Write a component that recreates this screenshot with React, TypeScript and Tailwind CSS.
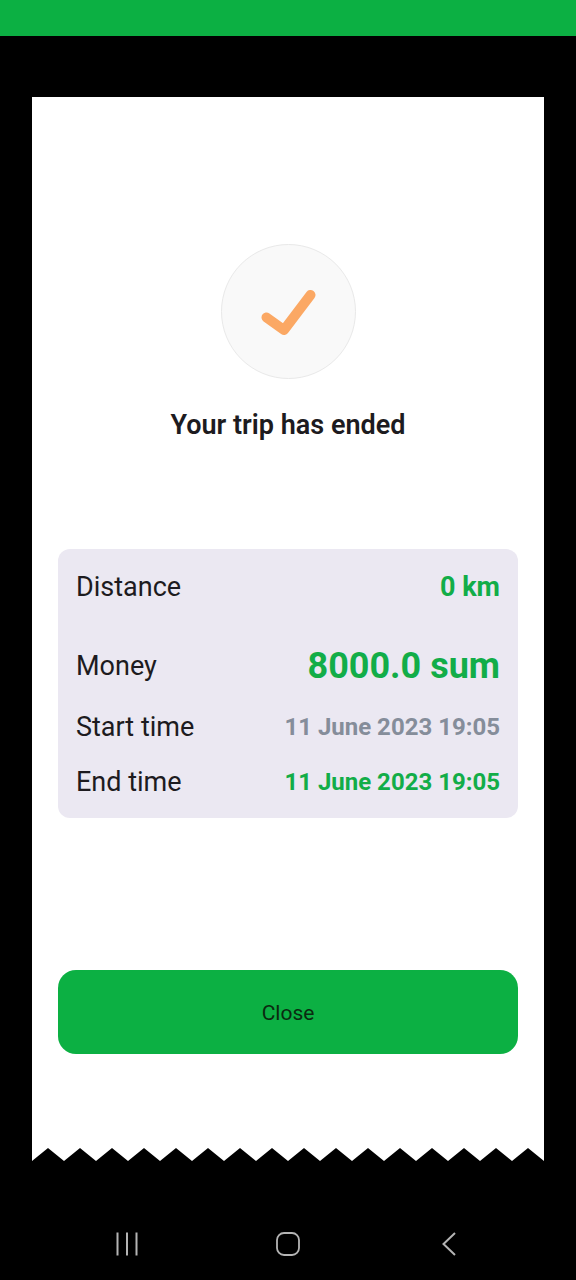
const details = [
  {
    label: "Distance",
    value: "0 km",
    row: "mb-[38px]",
    style: "text-[27px] text-[#12ad48]",
  },
  {
    label: "Money",
    value: "8000.0 sum",
    row: "mb-[21px]",
    style: "text-4xl text-[#12ad48]",
  },
  {
    label: "Start time",
    value: "11 June 2023 19:05",
    row: "mb-[15px]",
    style: "text-2xl text-[#858d9a]",
  },
  {
    label: "End time",
    value: "11 June 2023 19:05",
    row: "",
    style: "text-2xl text-[#12ad48]",
  },
];

const CheckBadge = () => (
  <div className="flex size-[135px] items-center justify-center rounded-full border border-[#e9e9e9] bg-[#f9f9f9]">
    <svg
      className="h-12 w-14"
      viewBox="0 0 56 48"
      fill="none"
      stroke="#fba864"
      strokeWidth="10"
      strokeLinecap="round"
      strokeLinejoin="round"
      aria-hidden="true"
    >
      <path d="M6.5 29.5 24 42 50.5 7" />
    </svg>
  </div>
);

const TornEdge = () => (
  <svg className="h-[14px] w-full" aria-hidden="true">
    <defs>
      <pattern id="teeth" width="32" height="14" patternUnits="userSpaceOnUse">
        <path d="M0 0H32V14L16 1 0 14Z" fill="#fff" />
      </pattern>
    </defs>
    <rect width="100%" height="14" fill="url(#teeth)" />
  </svg>
);

const NavBar = () => (
  <nav className="grid h-[72px] grid-cols-3 place-items-center px-[46px] text-[#b4b4b4]">
    <button aria-label="Recent apps">
      <svg width="24" height="24" fill="none" stroke="currentColor" strokeWidth="2">
        <path d="M2.5 0.5V23.5M12 0.5V23.5M21.5 0.5V23.5" />
      </svg>
    </button>
    <button aria-label="Home">
      <svg width="24" height="24" fill="none" stroke="currentColor" strokeWidth="1.8">
        <rect x="1" y="1" width="22" height="22" rx="7" />
      </svg>
    </button>
    <button aria-label="Back">
      <svg width="24" height="24" fill="none" stroke="currentColor" strokeWidth="2">
        <path d="M18 1 6.5 12 18 23" />
      </svg>
    </button>
  </nav>
);

const App = () => {
  return (
    <div className="flex min-h-screen flex-col bg-black font-[Roboto,sans-serif] text-[#1d1b20]">
      <header className="h-9 bg-[#0cb043]" />
      <main className="flex-1 px-8 pt-[61px] pb-11">
        <div className="flex flex-col items-center bg-white px-[26px] pt-[147px] pb-[93px]">
          <CheckBadge />
          <h1 className="mt-7 text-[27px] leading-9 font-semibold">
            Your trip has ended
          </h1>
          <dl className="mt-[106px] w-full rounded-xl bg-[#ebe8f2] px-[18px] pt-[18px] pb-4">
            {details.map((item) => (
              <div
                key={item.label}
                className={`flex items-center justify-between ${item.row}`}
              >
                <dt className="text-[27px] leading-10">{item.label}</dt>
                <dd className={`font-bold ${item.style}`}>{item.value}</dd>
              </div>
            ))}
          </dl>
          <button className="mt-[152px] h-[84px] w-full rounded-[18px] bg-[#0cb043] pt-1 text-[21px] text-[#0b2a10]">
            Close
          </button>
        </div>
        <TornEdge />
      </main>
      <NavBar />
    </div>
  );
};

export default App;
